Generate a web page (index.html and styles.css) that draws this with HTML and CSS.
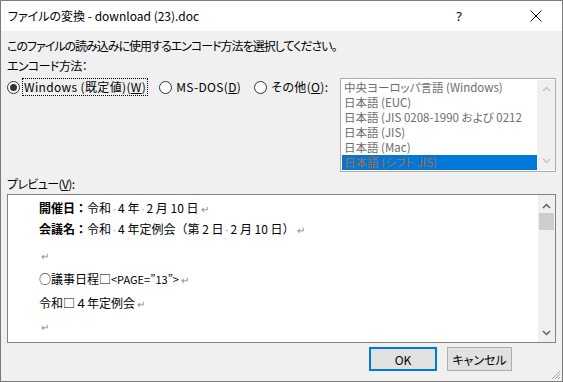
FILE: index.html
```html
<!DOCTYPE html>
<html lang="ja">
<head>
<meta charset="utf-8">
<link rel="stylesheet" href="styles.css">
</head>
<body>
<div class="window">
  <div class="titlebar">
    <span class="title">ファイルの変換 - download (23).doc</span>
    <span class="help">?</span>
    <span class="close">
      <svg width="12" height="12" viewBox="0 0 12 12"><path d="M0.5 0.5 L11.5 11.5 M11.5 0.5 L0.5 11.5" stroke="#000" stroke-width="1" fill="none"/></svg>
    </span>
  </div>
  <div class="body">
    <div class="intro">このファイルの読み込みに使用するエンコード方法を選択してください。</div>
    <div class="label">エンコード方法：</div>
    <div class="enc-row">
      <div class="radios">
        <label class="radio"><span class="dot checked"></span><span class="rtext focused">Windows (既定値)(<u>W</u>)</span></label>
        <label class="radio"><span class="dot"></span><span class="rtext">MS-DOS(<u>D</u>)</span></label>
        <label class="radio"><span class="dot"></span><span class="rtext">その他(<u>O</u>):</span></label>
      </div>
      <div class="listbox">
        <div class="items">
          <div class="item">中央ヨーロッパ言語 (Windows)</div>
          <div class="item">日本語 (EUC)</div>
          <div class="item">日本語 (JIS 0208-1990 および 0212</div>
          <div class="item">日本語 (JIS)</div>
          <div class="item">日本語 (Mac)</div>
          <div class="item sel">日本語 (シフト JIS)</div>
        </div>
        <div class="lscroll">
          <svg width="9" height="6" viewBox="0 0 9 6"><path d="M1 5 L4.5 1.5 L8 5" stroke="#c4c4c4" stroke-width="1.5" fill="none"/></svg>
          <svg width="9" height="6" viewBox="0 0 9 6"><path d="M1 1 L4.5 4.5 L8 1" stroke="#c4c4c4" stroke-width="1.5" fill="none"/></svg>
        </div>
      </div>
    </div>
    <div class="label preview-label">プレビュー(<u>V</u>):</div>
    <div class="preview">
      <div class="doc">
        <p class="l1"><b>開催日：</b>令和<i>·</i>4 年<i>·</i>2 月 10 日<span class="ret">↵</span></p>
        <p class="l2"><b>会議名：</b>令和<i>·</i>4 年定例会（第 2 日<i>·</i>2 月 10 日）<span class="ret">↵</span></p>
        <p class="l3"><span class="ret">↵</span></p>
        <p class="l4">○議事日程□<span class="tag">&lt;PAGE=”13”&gt;</span><span class="ret">↵</span></p>
        <p class="l5">令和□４年定例会<span class="ret">↵</span></p>
        <p class="l6"><span class="ret">↵</span></p>
      </div>
      <div class="pscroll">
        <svg width="9" height="6" viewBox="0 0 9 6"><path d="M1 5 L4.5 1.5 L8 5" stroke="#606060" stroke-width="1.5" fill="none"/></svg>
        <div class="thumb"></div>
        <div class="track"></div>
        <svg width="9" height="6" viewBox="0 0 9 6"><path d="M1 1 L4.5 4.5 L8 1" stroke="#606060" stroke-width="1.5" fill="none"/></svg>
      </div>
    </div>
    <div class="buttons">
      <button class="btn ok">OK</button>
      <button class="btn cancel">キャンセル</button>
    </div>
  </div>
  <svg class="grip" width="12" height="12" viewBox="0 0 12 12"><path d="M11 3 L3 11 M11 6 L6 11 M11 9 L9 11" stroke="#a0a0a0" stroke-width="1"/></svg>
</div>
</body>
</html>
```
FILE: styles.css
```css
* { box-sizing: border-box; }
html, body { margin: 0; padding: 0; }
body {
  width: 563px; height: 382px; overflow: hidden;
  font-family: "Noto Sans CJK JP", "Noto Sans", sans-serif;
  font-size: 12px; color: #000; background: #fff;
  font-feature-settings: "palt";
}
.window {
  position: relative;
  width: 563px; height: 382px;
  border: 1px solid #7a7a7a;
  border-top: none;
  display: flex; flex-direction: column;
  background: #f0f0f0;
}
.titlebar {
  height: 31px; flex: none; background: #fff;
  display: flex; align-items: center;
  padding-left: 7px;
  border-top: 1px solid #7a7a7a;
}
.title { flex: 1; font-size: 12px; line-height: 16px; }
.help { width: 20px; text-align: center; font-size: 13px; margin-right: 61px; font-family: "Noto Sans", sans-serif; }
.close { width: 12px; height: 12px; margin-right: 20px; display: flex; }
.body { flex: 1; padding: 6px 6px 0 6px; display: flex; flex-direction: column; }
.intro { height: 18px; line-height: 18px; flex: none; letter-spacing: -1px; }
.label { height: 18px; line-height: 18px; margin-top: 2px; flex: none; letter-spacing: -0.6px; }
.enc-row { display: flex; justify-content: space-between; margin-top: 3px; height: 94px; flex: none; }
.radios { display: flex; align-items: flex-start; flex: none; white-space: nowrap; }
.radio { display: flex; align-items: center; height: 18px; margin-right: 12px; flex: none; }
.radio:last-child { margin-right: 0; }
.dot {
  width: 13px; height: 13px; border-radius: 50%; border: 1px solid #333;
  background: #fff; margin: 0 3px 0 0; position: relative; flex: none;
}
.dot.checked::after {
  content: ""; position: absolute; left: 2px; top: 2px; width: 7px; height: 7px; border-radius: 50%; background: #333;
}
.rtext { line-height: 16px; padding: 0 1px; font-size: 12px; letter-spacing: 0.35px; white-space: nowrap; }
.rtext.focused { outline: 1px dotted #000; outline-offset: 0; }
u { text-decoration: underline; text-underline-offset: 1px; }
.listbox {
  width: 216px; height: 94px; flex: none; border: 1px solid #adadad; background: #fff;
  display: flex; padding: 1px 0 1px 1px;
}
.items { flex: 1; overflow: hidden; min-width: 0; }
.item { height: 15px; line-height: 15px; font-size: 11.5px; color: #6d6d6d; padding-left: 2px; white-space: nowrap; overflow: hidden; }
.item.sel { background: #0078d7; color: #b06a3a; }
.lscroll { width: 18px; flex: none; background: #f0f0f0; display: flex; flex-direction: column; justify-content: space-between; align-items: center; padding: 6px 0 6px; }
.preview-label { margin-top: 3px; }
.preview {
  height: 149px; flex: none; border: 1px solid #828282; background: #fff; display: flex;
  margin-top: 1px;
}
.doc { flex: 1; padding: 3px 0 0 31px; font-size: 12px; font-feature-settings: normal; }
.doc p { margin: 0; height: 20px; line-height: 20px; white-space: nowrap; }
.doc p.l2 { margin-top: 1px; }
.doc p.l3 { margin-top: 6px; }
.doc p.l4 { margin-top: 4px; }
.doc p.l5 { margin-top: 4px; }
.doc p.l6 { margin-top: 3px; }
.doc b { font-weight: bold; }
.doc i { font-style: normal; color: #888; font-size: 9px; padding: 0 1px; }
.ret { color: #888; font-size: 10px; margin-left: 2px; }
.tag { font-size: 11px; }
.pscroll { width: 17px; flex: none; background: #f0f0f0; display: flex; flex-direction: column; align-items: center; padding: 8px 0 6px; }
.thumb { width: 15px; height: 17px; background: #cdcdcd; margin-top: 4px; }
.track { flex: 1; }
.buttons { display: flex; justify-content: flex-end; gap: 10px; margin-top: 4px; padding-right: 44px; flex: none; }
.btn {
  height: 24px; background: #e1e1e1; border: 1px solid #adadad;
  font-family: "Noto Sans CJK JP", sans-serif; font-size: 12px; padding: 0; color: #000;
  font-feature-settings: "palt";
}
.btn.ok { border: 2px solid #0078d7; width: 68px; }
.btn.cancel { width: 65px; }
.grip { position: absolute; right: 1px; bottom: 1px; }
```
